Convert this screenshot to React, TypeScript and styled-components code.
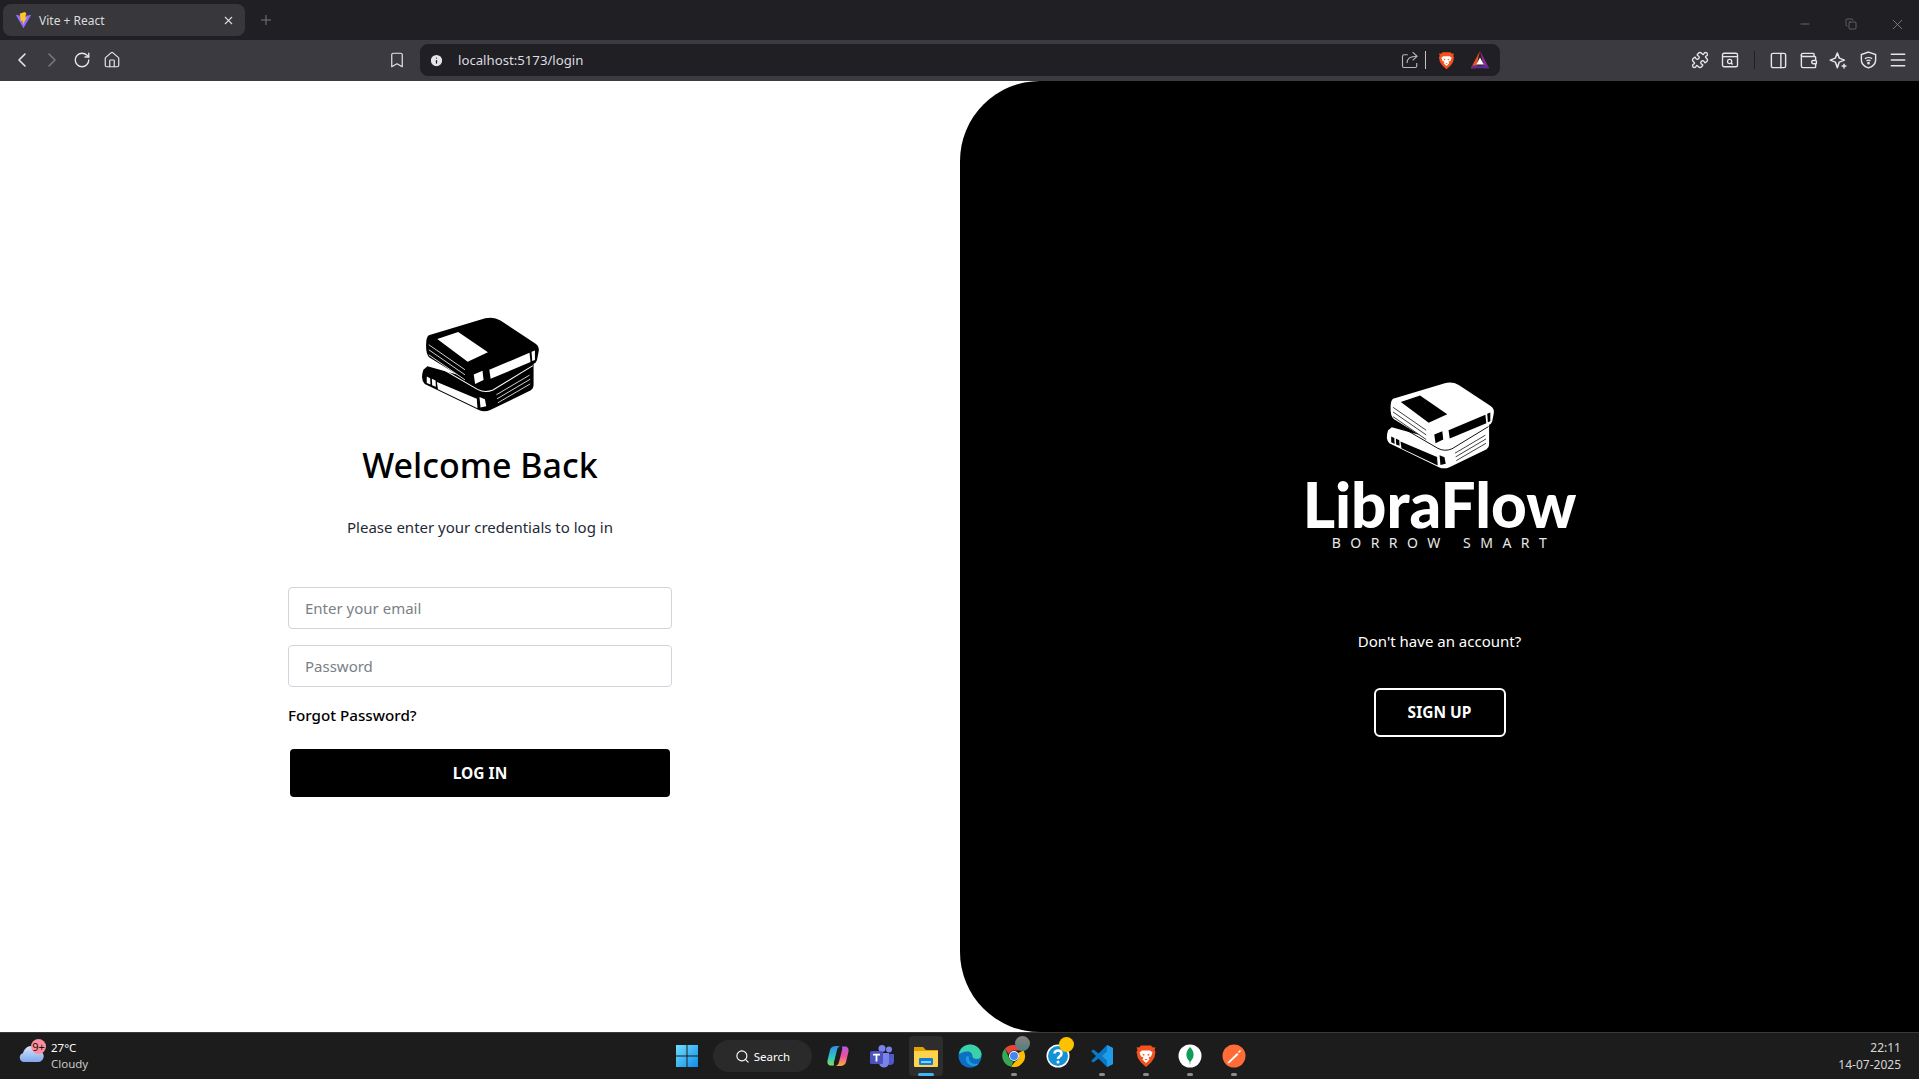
import styled, { createGlobalStyle } from "styled-components";
import {
  Bookmark,
  ChevronLeft,
  ChevronRight,
  Copy,
  Home,
  Info,
  Menu,
  Minus,
  PanelRight,
  Plus,
  Puzzle,
  RotateCw,
  Search,
  Wallet,
  X,
} from "lucide-react";

const GlobalStyle = createGlobalStyle`
  html, body, #root {
    margin: 0;
    height: 100%;
  }
  body {
    overflow: hidden;
    font-family: "Noto Sans", "Open Sans", sans-serif;
  }
  * {
    box-sizing: border-box;
  }
`;

const Screen = styled.div`
  height: 100vh;
  display: flex;
  flex-direction: column;
`;

/* browser chrome */

const TabStrip = styled.div`
  height: 40px;
  flex: none;
  display: flex;
  align-items: flex-start;
  padding: 4px 0 0 3px;
  background: #1f1f24;
`;

const Tab = styled.div`
  width: 242px;
  height: 32px;
  display: flex;
  align-items: center;
  padding: 0 10px 0 12px;
  border-radius: 8px;
  background: #37373c;
  color: #dcdcdf;
  font-size: 12px;
`;

const TabTitle = styled.span`
  flex: 1;
  margin-left: 7px;
`;

const NewTab = styled.div`
  width: 18px;
  margin: 8px 0 0 13px;
  color: #77777c;
  display: flex;
`;

const WindowControls = styled.div`
  margin: 0 0 0 auto;
  padding-right: 13px;
  display: flex;
  gap: 28px;
  color: #9a9a9e;
`;

const WindowButton = styled.div`
  width: 18px;
  height: 40px;
  display: flex;
  align-items: center;
  justify-content: center;
`;

const Toolbar = styled.div`
  height: 41px;
  flex: none;
  display: flex;
  align-items: center;
  padding: 0 0 1px 7px;
  background: #3a3a40;
  color: #e6e6e8;
`;

const Slot = styled.div<{ $dim?: boolean }>`
  width: 30px;
  height: 30px;
  flex: none;
  display: flex;
  align-items: center;
  justify-content: center;
  color: ${(p) => (p.$dim ? "#77777c" : "inherit")};
`;

const BookmarkSlot = styled(Slot)`
  margin-left: 255px;
  margin-right: 8px;
`;

const AddressBar = styled.div`
  width: 1080px;
  height: 32px;
  flex: none;
  display: flex;
  align-items: center;
  padding: 0 5px 0 9px;
  border-radius: 8px;
  background: #1f1f24;
`;

const Url = styled.span`
  flex: 1;
  margin-left: 14px;
  color: #dcdce0;
  font-size: 13.2px;
`;

const BarDivider = styled.div<{ $dark?: boolean }>`
  width: 1px;
  height: 18px;
  flex: none;
  background: ${(p) => (p.$dark ? "#1f1f24" : "#c4c4c8")};
`;

const BraveSlot = styled(Slot)`
  margin: 0 4px 0 5px;
`;

const ToolbarEnd = styled.div`
  margin-left: auto;
  padding-right: 6px;
  display: flex;
  align-items: center;
`;

const ExtensionGroup = styled.div`
  display: flex;
  align-items: center;
  margin-right: 9px;
`;

const DividerGap = styled.div`
  margin-right: 8px;
`;

/* page */

const Main = styled.main`
  flex: 1;
  min-height: 0;
  display: grid;
  grid-template-columns: 960px 959px;
  background: #fff;
`;

const LoginPane = styled.section`
  display: flex;
  align-items: center;
  justify-content: center;
`;

const LoginForm = styled.form`
  width: 384px;
  display: flex;
  flex-direction: column;
  align-items: center;
`;

const Title = styled.h1`
  margin: 26px 0 0;
  color: #000;
  font-size: 34px;
  line-height: 50px;
  font-weight: 500;
`;

const Subtitle = styled.p`
  margin: 25px 0 0;
  color: #1f2937;
  font-size: 15px;
  line-height: 24px;
`;

const Field = styled.input`
  width: 100%;
  height: 42px;
  margin-top: 16px;
  padding: 0 16px;
  border: 1px solid #d1d5db;
  border-radius: 4px;
  background: #fff;
  font: 15px "Noto Sans", sans-serif;
  &::placeholder {
    color: #7b7f86;
  }
`;

const EmailField = styled(Field)`
  margin-top: 48px;
`;

const ForgotLink = styled.a`
  align-self: flex-start;
  margin-top: 16px;
  color: #000;
  font-size: 15.2px;
  line-height: 24px;
  font-weight: 500;
`;

const SubmitButton = styled.button`
  width: 380px;
  height: 48px;
  margin-top: 22px;
  border: 0;
  border-radius: 4px;
  background: #000;
  color: #fff;
  font: 700 15.5px "Noto Sans", sans-serif;
`;

const BrandPane = styled.section`
  display: flex;
  flex-direction: column;
  align-items: center;
  justify-content: center;
  padding-top: 5px;
  border-radius: 80px 0 0 80px;
  background: #000;
  color: #fff;
`;

const BrandName = styled.div`
  margin-top: 3px;
  font-family: Lato, "Noto Sans", sans-serif;
  font-size: 62px;
  line-height: 60px;
  font-weight: 900;
`;

const Tagline = styled.div`
  margin-right: -9px;
  font-size: 14px;
  line-height: 18px;
  letter-spacing: 9.5px;
  color: #e8e8e8;
`;

const Prompt = styled.p`
  margin: 77px 0 0;
  font-size: 15px;
  line-height: 24px;
`;

const SignUpButton = styled.button`
  width: 132px;
  height: 49px;
  margin-top: 35px;
  border: 2px solid #fff;
  border-radius: 6px;
  background: #000;
  color: #fff;
  font: 700 15.5px "Noto Sans", sans-serif;
`;

/* taskbar */

const Taskbar = styled.footer`
  height: 47px;
  flex: none;
  display: grid;
  grid-template-columns: 1fr auto 1fr;
  align-items: center;
  border-top: 1px solid #3a3a3a;
  background: #1c1c1c;
  color: #fff;
`;

const Weather = styled.div`
  display: flex;
  align-items: center;
  padding-left: 19px;
`;

const WeatherIcon = styled.div`
  position: relative;
  width: 25px;
  height: 30px;
  padding-bottom: 9px;
  display: flex;
  align-items: flex-end;
`;

const Badge = styled.span`
  position: absolute;
  top: -2px;
  right: -2px;
  width: 15px;
  height: 15px;
  border-radius: 50%;
  background: #ff8d9d;
  color: #111;
  font-size: 11px;
  line-height: 15px;
  text-align: center;
`;

const WeatherText = styled.div`
  margin-left: 7px;
  font-size: 11.5px;
  line-height: 16px;
`;

const Muted = styled.div`
  color: #c8c8c8;
`;

const Centre = styled.div`
  display: flex;
  align-items: center;
  margin-left: 2px;
`;

const StartButton = styled.div`
  width: 44px;
  display: flex;
  justify-content: center;
  margin-right: 4px;
`;

const SearchPill = styled.div`
  width: 99px;
  height: 32px;
  margin-right: 4px;
  display: flex;
  align-items: center;
  justify-content: center;
  gap: 4px;
  border-radius: 16px;
  background: #2a2a2a;
  font-size: 11.5px;
`;

const AppButton = styled.div<{ $active?: boolean; $running?: boolean }>`
  position: relative;
  width: 44px;
  height: 40px;
  display: flex;
  align-items: center;
  justify-content: center;
  &::before {
    content: "";
    display: ${(p) => (p.$active ? "block" : "none")};
    position: absolute;
    inset: 0 5px;
    border-radius: 4px;
    background: #2d2d2d;
  }
  &::after {
    content: "";
    display: ${(p) => (p.$active || p.$running ? "block" : "none")};
    position: absolute;
    bottom: 0;
    left: 50%;
    width: ${(p) => (p.$active ? 16 : 6)}px;
    height: 3px;
    margin-left: ${(p) => (p.$active ? -8 : -3)}px;
    border-radius: 2px;
    background: ${(p) => (p.$active ? "#3fb6f5" : "#8c8c8c")};
  }
  svg {
    position: relative;
  }
`;

const Avatar = styled.span`
  position: absolute;
  top: 0;
  right: 6px;
  width: 15px;
  height: 15px;
  border-radius: 50%;
  background: linear-gradient(#8d8278, #4f7f86);
`;

const NoticeDot = styled.span`
  position: absolute;
  top: 1px;
  right: 6px;
  width: 15px;
  height: 15px;
  border-radius: 50%;
  background: #fcc200;
`;

const Clock = styled.div`
  justify-self: end;
  padding-right: 18px;
  text-align: right;
  font-size: 12px;
  line-height: 17px;
  color: #d6d6d6;
`;

/* drawings */

type BookStackProps = { ink: string; paper: string; width: number };

const BookStack = ({ ink, paper, width }: BookStackProps) => (
  <svg
    width={width}
    height={(width * 290) / 355}
    viewBox="62 45 355 290"
    aria-hidden="true"
  >
    <path
      fill={ink}
      d="M84 194 72 204Q62 232 76 246L236 323Q252 331 270 323L390 265Q398 260 398 250V180L250 240Z"
    />
    <path
      fill={ink}
      d="M88 102 255 52Q280 46 300 58L403 126Q416 135 413 150L408 176Q406 184 396 187L240 249Q225 252 210 242L90 168Q79 158 80 130Q80 108 88 102Z"
    />
    <path
      fill="none"
      stroke={paper}
      strokeWidth="3"
      d="M84 176 232 262Q254 274 278 264L396 192"
    />
    <g fill={paper}>
      <path d="M113 113 175 92 263 152 203 180Z" />
      <path d="M221 218 247 207 250 234 225 246Z" />
      <path d="M267 204 386 154 389 181 271 231Z" />
      <path d="M392 151 402 147 402 175 394 178Z" />
      <path d="M112 240 230 290 232 318 115 262Z" />
      <path d="M82 224 92 229 93 248 82 243Z" />
      <path d="M97 231 108 236 109 254 98 250Z" />
      <path d="M238 285 254 291 258 312 241 316Z" />
    </g>
    <g fill="none" stroke={paper} strokeWidth="2.4">
      <path d="M88 130 195 204" />
      <path d="M88 145 195 219" />
      <path d="M88 160 195 234" />
      <path d="M288 278 386 220" />
      <path d="M290 290 388 232" />
      <path d="M292 302 388 246" />
    </g>
  </svg>
);

const ViteLogo = () => (
  <svg width="17" height="17" viewBox="0 0 24 24">
    <path fill="#8f6cff" d="M1 4 12 23 23 4 12 6Z" />
    <path fill="#ffc81f" d="M14 0 7 2l1 11 3-1v6l6-11-3 1 2-6Z" />
  </svg>
);

const BraveLogo = ({ size }: { size: number }) => (
  <svg width={size} height={size} viewBox="0 0 24 24">
    <path
      fill="#f4511e"
      d="M7 1.500h10l2 2 2.500-.2-1 3 1 1.500-1.200 6-3.300 4.700L12 23l-5-4.500-3.300-4.700-1.200-6 1-1.500-1-3L5 3.500Z"
    />
    <path
      fill="#fff"
      d="M8 6.500h8l2.500 2-1.500 4-2.500 1 1 2-3.500 3.500-3.500-3.500 1-2-2.500-1-1.500-4Z"
    />
    <path fill="#f4511e" d="M8.500 9.500 11 11l-2 .8ZM15.500 9.500 13 11l2 .8ZM10.500 15h3L12 16.500Z" />
  </svg>
);

const RewardsLogo = () => (
  <svg width="20" height="20" viewBox="0 0 24 24">
    <path fill="#f04e23" d="M12 1 1 22h6Z" />
    <path fill="#8a2b8f" d="M12 1 23 22h-6Z" />
    <path fill="#5c2d91" d="M1 22h22l-2-3.500H3Z" />
    <path fill="#fff" d="M12 9 16.500 17.500h-9Z" />
  </svg>
);

const ShareIcon = () => (
  <svg width="18" height="18" viewBox="0 0 24 24" fill="none" stroke="#b8b8bc" strokeWidth="1.500">
    <path d="M9 5H4a2 2 0 0 0-2 2v13a2 2 0 0 0 2 2h15a2 2 0 0 0 2-2v-4" />
    <path d="M8 16c0-6 4-9 13-9" />
    <path d="m15.500 1.500 6 5.500-6 5.500" />
  </svg>
);

const SearchWindowIcon = () => (
  <svg width="18" height="18" viewBox="0 0 24 24" fill="none" stroke="currentColor" strokeWidth="1.800">
    <rect x="2" y="3" width="20" height="18" rx="2" />
    <path d="M2 7.500h20" />
    <circle cx="11.500" cy="14" r="2.800" />
    <path d="m13.500 16 2 2" />
  </svg>
);

const LeoIcon = () => (
  <svg width="19" height="19" viewBox="0 0 24 24" fill="none" stroke="currentColor" strokeWidth="1.900">
    <path d="M10.500 2.500 13 9l6.500 2.500L13 14l-2.500 7L8 14l-6.500-2.500L8 9Z" strokeLinejoin="round" />
    <path d="M19 16v6M16 19h6" />
  </svg>
);

const ShieldWifiIcon = () => (
  <svg width="19" height="20" viewBox="0 0 24 24" fill="none" stroke="currentColor" strokeWidth="1.800">
    <path d="M12 2 21 5v7c0 5-4 8.500-9 10-5-1.500-9-5-9-10V5Z" />
    <path d="M7.500 10.500c2.500-2 6.500-2 9 0M9.500 13c1.500-1 3.500-1 5 0" />
    <circle cx="12" cy="16" r=".8" fill="currentColor" />
  </svg>
);

const CloudIcon = () => (
  <svg width="25" height="17" viewBox="0 0 25 17">
    <defs>
      <linearGradient id="cloud" x1="0" y1="0" x2="0" y2="1">
        <stop offset="0" stopColor="#d8e6ff" />
        <stop offset="1" stopColor="#7ea7ea" />
      </linearGradient>
    </defs>
    <path
      fill="url(#cloud)"
      d="M5 17a4.500 4.500 0 0 1-1-8.800C5 4 8.500.5 13 1c3 .3 5 2 6 4.500a5.800 5.800 0 0 1 1 11.500Z"
    />
  </svg>
);

const WindowsLogo = () => (
  <svg width="24" height="24" viewBox="0 0 24 24">
    <defs>
      <linearGradient id="win" x1="0" y1="0" x2="1" y2="1">
        <stop offset="0" stopColor="#6fdcff" />
        <stop offset="1" stopColor="#0f8ee8" />
      </linearGradient>
    </defs>
    <path fill="url(#win)" d="M1 1h10.500v10.500H1zM12.500 1H23v10.500H12.500zM1 12.500h10.500V23H1zM12.500 12.500H23V23H12.500z" />
  </svg>
);

const CopilotLogo = () => (
  <svg width="24" height="24" viewBox="0 0 24 24">
    <defs>
      <linearGradient id="copLeft" x1="0.500" y1="0" x2="0.500" y2="1">
        <stop offset="0" stopColor="#2f8fe8" />
        <stop offset="0.600" stopColor="#2fc6c0" />
        <stop offset="1" stopColor="#8fdc5a" />
      </linearGradient>
      <linearGradient id="copRight" x1="0.500" y1="0" x2="0.500" y2="1">
        <stop offset="0" stopColor="#b45be0" />
        <stop offset="0.500" stopColor="#ee4f9c" />
        <stop offset="1" stopColor="#f9b13a" />
      </linearGradient>
    </defs>
    <path fill="url(#copLeft)" d="M10 2h4.500c-2 .5-3 2-3.500 4L8.500 16c-.5 2-1 3-.5 5.500H5c-2.500 0-4-2-3.500-5L4 6c.5-2.500 3-4 6-4Z" />
    <path fill="url(#copRight)" d="M14 22H9.500c2-.5 3-2 3.500-4l2.500-10c.5-2 1-3 .5-5.500h3c2.500 0 4 2 3.500 5L20 18c-.5 2.500-3 4-6 4Z" />
  </svg>
);

const TeamsLogo = () => (
  <svg width="26" height="24" viewBox="0 0 26 24">
    <circle cx="20" cy="5.500" r="3" fill="#7b83eb" />
    <circle cx="13" cy="4.500" r="3.500" fill="#7b83eb" />
    <path fill="#5059c9" d="M17 10h8v7a4 4 0 0 1-8 0Z" />
    <path fill="#7b83eb" d="M7 9h13v9a5 5 0 0 1-10 1Z" />
    <rect x="1" y="7" width="13" height="13" rx="1.500" fill="#4b53bc" />
    <path fill="#fff" d="M4 9.800h7v1.700H8.400v6H6.600v-6H4Z" />
  </svg>
);

const FolderLogo = () => (
  <svg width="26" height="24" viewBox="0 0 26 24">
    <path fill="#e6a100" d="M1 3h9l3 3h12v3H1Z" />
    <path fill="#ffd34d" d="M1 7h24v15a1 1 0 0 1-1 1H2a1 1 0 0 1-1-1Z" />
    <rect x="6" y="14" width="14" height="7" rx="1" fill="#0f7fd6" />
    <rect x="8" y="17" width="10" height="2" fill="#7fd0ff" />
  </svg>
);

const EdgeLogo = () => (
  <svg width="24" height="24" viewBox="0 0 24 24">
    <circle cx="12" cy="12" r="11.500" fill="#0c6fc4" />
    <path fill="#3bd0a8" d="M1 10C2 4 7 .500 12 .500c6 0 11.500 4.500 11.500 10 0 3-2 4.500-5 4.500-2 0-4-1-4-2.500 0-3-2-5-5-5-4 0-7 2-8.500 2.500Z" />
    <path fill="#1d9be0" d="M8 13c-1 5 3 9 8 9 2 0 4-1 5-2.500-3 1-7 .5-9-2-1.500-2-1-4-1-5-1-.5-2.500-.500-3 .500Z" />
  </svg>
);

const ChromeLogo = () => (
  <svg width="24" height="24" viewBox="0 0 24 24">
    <path fill="#ea4335" d="M12 1a11 11 0 0 1 9.500 5.500H12a5.500 5.500 0 0 0-5.200 3.700L3 4.500A11 11 0 0 1 12 1Z" />
    <path fill="#34a853" d="M3 4.500 7.500 15a5.500 5.500 0 0 0 4 2.500L9 22.600A11 11 0 0 1 3 4.500Z" />
    <path fill="#fbbc05" d="M21.500 6.500A11 11 0 0 1 9 22.600l4.500-5.300A5.500 5.500 0 0 0 16 9Z" />
    <circle cx="12" cy="12" r="5" fill="#fff" />
    <circle cx="12" cy="12" r="4" fill="#4285f4" />
  </svg>
);

const HelpLogo = () => (
  <svg width="24" height="24" viewBox="0 0 24 24">
    <circle cx="12" cy="12" r="11.500" fill="#fff" />
    <circle cx="12" cy="12" r="10" fill="#1592d6" />
    <path fill="none" stroke="#fff" strokeWidth="2.600" d="M8.500 9.500c0-4 7-4 7 0 0 3-3.500 3-3.500 5.500" />
    <circle cx="12" cy="18" r="1.500" fill="#fff" />
  </svg>
);

const VsCodeLogo = () => (
  <svg width="24" height="24" viewBox="0 0 24 24">
    <path fill="#0a78c8" d="M17 1 8.500 9.500 3.500 5.500 1 7l5 5-5 5 2.500 1.500 5-4L17 23l6-3V4ZM17 7v10l-5.500-5Z" />
    <path fill="#1f9ce8" d="M17 1 23 4v16l-6 3Zm0 6-5.500 5 5.500 5Z" fillRule="evenodd" />
  </svg>
);

const CompassLogo = () => (
  <svg width="24" height="24" viewBox="0 0 24 24">
    <circle cx="12" cy="12" r="11.500" fill="#fff" />
    <path fill="#0f9d58" d="M12 3c3 3 4 6 3.500 9-.4 2.500-2 4.500-3 5.500l-.5 4-.5-4c-1-1-2.600-3-3-5.500C8 9 9 6 12 3Z" />
  </svg>
);

const PostmanLogo = () => (
  <svg width="24" height="24" viewBox="0 0 24 24">
    <circle cx="12" cy="12" r="11.500" fill="#ff6c37" />
    <path fill="#fff" d="m6 18 9-9 1.500 1.500-9 8.500-2 .5ZM16 8l2-2 1 1-2 2Z" />
  </svg>
);

const App = () => (
  <Screen>
    <GlobalStyle />
    <TabStrip>
      <Tab>
        <ViteLogo />
        <TabTitle>Vite + React</TabTitle>
        <X size={13} strokeWidth={2} />
      </Tab>
      <NewTab>
        <Plus size={16} strokeWidth={1.5} />
      </NewTab>
      <WindowControls>
        <WindowButton>
          <Minus size={14} strokeWidth={1} />
        </WindowButton>
        <WindowButton>
          <Copy size={12} strokeWidth={1} />
        </WindowButton>
        <WindowButton>
          <X size={17} strokeWidth={1} />
        </WindowButton>
      </WindowControls>
    </TabStrip>

    <Toolbar>
      <Slot>
        <ChevronLeft size={24} strokeWidth={1.6} />
      </Slot>
      <Slot $dim>
        <ChevronRight size={24} strokeWidth={1.6} />
      </Slot>
      <Slot>
        <RotateCw size={18} strokeWidth={1.8} />
      </Slot>
      <Slot>
        <Home size={18} strokeWidth={1.6} />
      </Slot>
      <BookmarkSlot>
        <Bookmark size={18} strokeWidth={1.6} />
      </BookmarkSlot>
      <AddressBar>
        <Info size={15} fill="#e6e6e8" stroke="#1f1f24" strokeWidth={2} />
        <Url>localhost:5173/login</Url>
        <Slot>
          <ShareIcon />
        </Slot>
        <BarDivider />
        <BraveSlot>
          <BraveLogo size={19} />
        </BraveSlot>
        <Slot>
          <RewardsLogo />
        </Slot>
      </AddressBar>
      <ToolbarEnd>
        <ExtensionGroup>
          <Slot>
            <Puzzle size={18} strokeWidth={1.8} />
          </Slot>
          <Slot>
            <SearchWindowIcon />
          </Slot>
        </ExtensionGroup>
        <DividerGap>
          <BarDivider $dark />
        </DividerGap>
        <Slot>
          <PanelRight size={19} strokeWidth={1.8} />
        </Slot>
        <Slot>
          <Wallet size={19} strokeWidth={1.8} />
        </Slot>
        <Slot>
          <LeoIcon />
        </Slot>
        <Slot>
          <ShieldWifiIcon />
        </Slot>
        <Slot>
          <Menu size={20} strokeWidth={1.8} />
        </Slot>
      </ToolbarEnd>
    </Toolbar>

    <Main>
      <LoginPane>
        <LoginForm onSubmit={(e) => e.preventDefault()}>
          <BookStack ink="#000" paper="#fff" width={120} />
          <Title>Welcome Back</Title>
          <Subtitle>Please enter your credentials to log in</Subtitle>
          <EmailField type="email" placeholder="Enter your email" />
          <Field type="password" placeholder="Password" />
          <ForgotLink>Forgot Password?</ForgotLink>
          <SubmitButton type="submit">LOG IN</SubmitButton>
        </LoginForm>
      </LoginPane>
      <BrandPane>
        <BookStack ink="#fff" paper="#000" width={110} />
        <BrandName>LibraFlow</BrandName>
        <Tagline>BORROW SMART</Tagline>
        <Prompt>Don't have an account?</Prompt>
        <SignUpButton type="button">SIGN UP</SignUpButton>
      </BrandPane>
    </Main>

    <Taskbar>
      <Weather>
        <WeatherIcon>
          <CloudIcon />
          <Badge>9+</Badge>
        </WeatherIcon>
        <WeatherText>
          <div>27°C</div>
          <Muted>Cloudy</Muted>
        </WeatherText>
      </Weather>
      <Centre>
        <StartButton>
          <WindowsLogo />
        </StartButton>
        <SearchPill>
          <Search size={15} strokeWidth={1.8} />
          Search
        </SearchPill>
        <AppButton>
          <CopilotLogo />
        </AppButton>
        <AppButton>
          <TeamsLogo />
        </AppButton>
        <AppButton $active>
          <FolderLogo />
        </AppButton>
        <AppButton>
          <EdgeLogo />
        </AppButton>
        <AppButton $running>
          <ChromeLogo />
          <Avatar />
        </AppButton>
        <AppButton>
          <HelpLogo />
          <NoticeDot />
        </AppButton>
        <AppButton $running>
          <VsCodeLogo />
        </AppButton>
        <AppButton $running>
          <BraveLogo size={24} />
        </AppButton>
        <AppButton $running>
          <CompassLogo />
        </AppButton>
        <AppButton $running>
          <PostmanLogo />
        </AppButton>
      </Centre>
      <Clock>
        <div>22:11</div>
        <div>14-07-2025</div>
      </Clock>
    </Taskbar>
  </Screen>
);

export default App;
